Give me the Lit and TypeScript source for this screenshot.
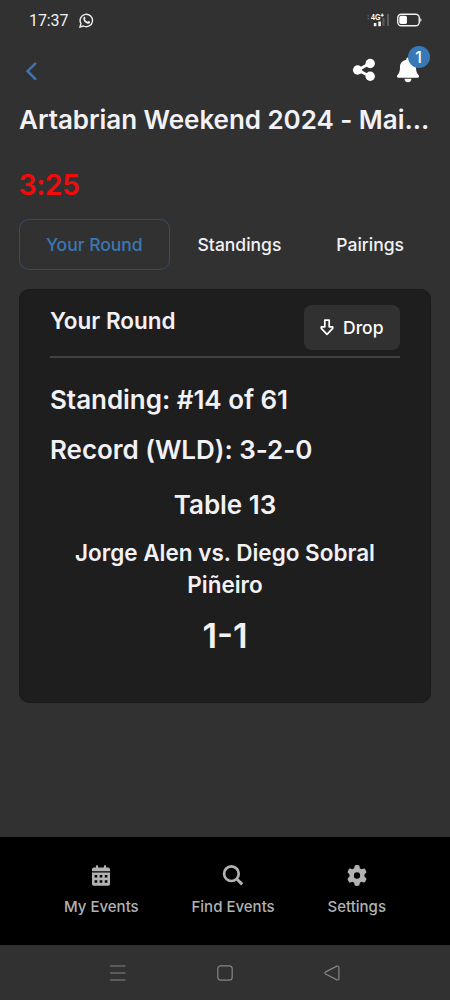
import { LitElement, html, css } from "lit";
import { customElement } from "lit/decorators.js";

const gear = "M495.9 166.6c3.2 8.7 .5 18.4-6.4 24.6l-43.3 39.4c1.1 8.3 1.7 16.8 1.7 25.4s-.6 17.1-1.7 25.4l43.3 39.4c6.9 6.2 9.6 15.9 6.4 24.6c-4.4 11.9-9.7 23.3-15.8 34.3l-4.7 8.1c-6.6 11-14 21.4-22.1 31.2c-5.9 7.2-15.7 9.6-24.5 6.8l-55.7-17.7c-13.4 10.3-28.2 18.9-44 25.4l-12.5 57.1c-2 9.1-9 16.3-18.2 17.8c-13.8 2.3-28 3.5-42.5 3.5s-28.7-1.2-42.5-3.5c-9.2-1.5-16.2-8.7-18.2-17.8l-12.5-57.1c-15.8-6.5-30.6-15.1-44-25.4L83.1 425.9c-8.8 2.8-18.6 .3-24.5-6.8c-8.1-9.8-15.5-20.2-22.1-31.2l-4.7-8.1c-6.1-11-11.4-22.4-15.8-34.3c-3.2-8.7-.5-18.4 6.4-24.6l43.3-39.4C64.6 273.1 64 264.6 64 256s.6-17.1 1.7-25.4L22.4 191.2c-6.9-6.2-9.6-15.9-6.4-24.6c4.4-11.9 9.7-23.3 15.8-34.3l4.7-8.1c6.6-11 14-21.4 22.1-31.2c5.9-7.2 15.7-9.6 24.5-6.8l55.7 17.7c13.4-10.3 28.2-18.9 44-25.4l12.5-57.1c2-9.1 9-16.3 18.2-17.8C227.3 1.2 241.5 0 256 0s28.7 1.2 42.5 3.5c9.2 1.5 16.2 8.7 18.2 17.8l12.5 57.1c15.8 6.5 30.6 15.1 44 25.4l55.7-17.7c8.8-2.8 18.6-.3 24.5 6.8c8.1 9.8 15.5 20.2 22.1 31.2l4.7 8.1c6.1 11 11.4 22.4 15.8 34.3zM256 336a80 80 0 1 0 0-160 80 80 0 1 0 0 160z";

const calendarIcon = html`<svg width="18" height="21" viewBox="0 0 18 21" fill="currentColor">
  <path fill-rule="evenodd" d="M0 7.6h18v11.4a1.8 1.8 0 0 1-1.8 1.8H1.8A1.8 1.8 0 0 1 0 19zM2.6 10v2.4h2.6V10zM7.7 10v2.4h2.6V10zM12.8 10v2.4h2.6V10zM2.6 15.3v2.5h2.6v-2.5zM7.7 15.3v2.5h2.6v-2.5zM12.8 15.3v2.5h2.6v-2.5z"/>
  <path d="M0 6.3V4.4a1.8 1.8 0 0 1 1.8-1.8h2.1V1a.7.7 0 0 1 .7-.7h.8a.7.7 0 0 1 .7.7v1.6h5.8V1a.7.7 0 0 1 .7-.7h.8a.7.7 0 0 1 .7.7v1.6h2.1A1.8 1.8 0 0 1 18 4.4v1.9z"/></svg>`;
const searchIcon = html`<svg width="22" height="21" viewBox="0 0 22 21" fill="none" stroke="currentColor" stroke-width="2.7">
  <circle cx="9.4" cy="8.7" r="7.3"/><path d="M14.3 13.5l5.9 5.9" stroke-width="3"/></svg>`;
const gearIcon = html`<svg width="20" height="21" viewBox="0 0 512 512" preserveAspectRatio="none"><path fill="currentColor" d=${gear}></path></svg>`;

@customElement("app-root")
export class AppRoot extends LitElement {
  static styles = css`
    :host { display: flex; flex-direction: column; height: 1000px; width: 450px; overflow: hidden;
      box-sizing: border-box; background: #313131; color: #f1f1f6;
      font-family: Inter, "Noto Sans", sans-serif; font-weight: 600; }
    svg { display: block; flex: none; }
    .status { height: 40px; display: flex; align-items: center; padding: 0 28px 0 29px; box-sizing: border-box; }
    .time { font: 400 16px/20px Roboto, sans-serif; padding-top: 1px; width: 50px; letter-spacing: -.1px; color: #f2f2f2; }
    .grow { flex: 1; }
    .battery { margin-left: 5px; }
    .top { height: 61px; display: flex; align-items: center; padding: 1px 19px 0 25px; box-sizing: border-box; }
    .share { margin: 0 20.5px 2px 0; }
    .bell { position: relative; width: 35px; height: 60px; display: flex; align-items: center; }
    .bell svg { margin-bottom: 2px; }
    .badge { position: absolute; left: 11.5px; top: 5px; width: 22px; height: 22px; border-radius: 50%;
      background: #3778b7; font-size: 16px; font-weight: 500; line-height: 22px; text-align: center; color: #fff; }
    .title { margin: 0; padding: 0 19px; height: 38px; font-size: 26px; letter-spacing: -.04px; font-weight: 600; line-height: 38px; white-space: nowrap; }
    .timer { padding: 0 18.5px; margin-top: 27px; height: 38px; font-size: 28.5px; letter-spacing: -.5px; line-height: 38px; color: #f30b0b; }
    .tabs { display: flex; margin: 15px 19px 0; height: 51px; font-size: 17.5px; font-weight: 500; }
    .tab { display: flex; align-items: center; justify-content: center; box-sizing: border-box; padding-bottom: 1px; border: 1px solid transparent; border-radius: 10px; }
    .tab.a { width: 151px; color: #3b77b4; border-color: #344d66; }
    .tab.b { width: 140px; }
    .tab.c { width: 122px; }
    .card { margin: 19px 19px 0; height: 414px; box-sizing: border-box; border: 1px solid #1a1a1a; border-radius: 10px;
      background: #1e1e1e; padding: 15px 30px 0; }
    .head { display: flex; justify-content: space-between; align-items: flex-start; height: 53px; box-sizing: border-box; border-bottom: 2px solid #414141; }
    .h { font-size: 22.5px; line-height: 31px; }
    .drop { display: flex; align-items: center; gap: 9px; width: 96px; height: 45px; padding-left: 16px; box-sizing: border-box;
      border-radius: 8px; background: #313131; font-size: 17.5px; font-weight: 500; color: #fff; }
    .line { font-size: 26px; letter-spacing: -.04px; line-height: 36px; }
    .s1 { margin-top: 24px; } .s2 { margin-top: 14px; } .s3 { margin-top: 19px; }
    .center { text-align: center; }
    .players { font-size: 22.5px; line-height: 32px; margin-top: 14px; }
    .score { font-size: 34.5px; line-height: 44px; margin-top: 13px; }
    .nav { margin-top: auto; height: 108px; box-sizing: border-box; background: #000; color: #b2b2b2; display: flex;
      justify-content: space-between; padding: 27.5px 64px 0; font-size: 15px; font-weight: 500; }
    .item { display: flex; flex-direction: column; align-items: center; }
    .item span { margin-top: 10.5px; line-height: 22px; white-space: nowrap; }
    .system { height: 55px; display: flex; align-items: center; justify-content: space-between; padding: 0 110px 0 109px; box-sizing: border-box; color: #858585; }
    .ant { font: 700 9px "Liberation Sans", sans-serif; }
  `;

  render() {
    return html`
      <div class="status">
        <span class="time">17:37</span>
        <svg width="15" height="15" viewBox="0 0 15 15" fill="none" stroke="#eee" stroke-width="1.4">
          <path d="M1 14l.9-3.5A6.2 6.2 0 1 1 4.5 13z"/>
          <path fill="#eee" stroke="none" d="M5 3.8c.5-.3.9-.1 1 .3l.5 1.2c0 .4-.6.7-.6 1 .5 1.1 1.5 2 2.7 2.5.4 0 .7-.8 1.1-.7l1.3.7c.5.4-.1 1.3-.7 1.7-1.3.7-3.1-.1-4.4-1.3C4.5 7.9 3.6 5.2 5 3.8z"/>
        </svg>
        <span class="grow"></span>
        <svg width="25" height="16" viewBox="0 0 25 16">
          <g fill="#5c5c5c"><rect x=".5" y="3" width="1.5" height="1.5"/><rect x=".5" y="6" width="1.5" height="1.5"/><rect x="15.5" y="6" width="2" height="8"/><rect x="20" y="2" width="2" height="12"/></g>
          <g fill="#f2f2f2"><rect x="6.8" y="11" width="2.6" height="3.2"/><rect x="11.3" y="9.5" width="2.6" height="4.7"/></g>
          <text class="ant" x="4" y="8" fill="#fff" textLength="9.5" lengthAdjust="spacingAndGlyphs">4G</text>
          <path d="M13.6 3.2h3.2M15.2 1.6v3.2" stroke="#fff" stroke-width="1.1"/>
        </svg>
        <svg class="battery" width="25" height="14" viewBox="0 0 25 14">
          <rect x=".75" y="1.2" width="21.5" height="11.5" rx="3.5" fill="none" stroke="#f2f2f2" stroke-width="1.4"/>
          <rect x="2.3" y="2.8" width="7.7" height="8.3" rx="1.8" fill="#fff"/><path d="M23.2 4.9q1.3.4 1.3 2.05t-1.3 2.05z" fill="#ddd"/>
        </svg>
      </div>
      <div class="top">
        <svg width="13" height="20" viewBox="0 0 13 20" fill="none" stroke="#3b77b4" stroke-width="2.5"><path d="M11 1.8L2.6 10.2l8.4 8.4"/></svg>
        <span class="grow"></span>
        <svg class="share" width="24" height="24" viewBox="0 0 24 24" fill="#fff" stroke="#fff">
          <path d="M18.2 5.3L5.8 12l12.4 6.5" fill="none" stroke-width="2.8"/>
          <circle cx="5.6" cy="12" r="4.7" stroke="none"/><circle cx="18.2" cy="5.5" r="4.7" stroke="none"/><circle cx="18.2" cy="18.2" r="4.7" stroke="none"/>
        </svg>
        <div class="bell">
          <svg width="24" height="26" viewBox="0 0 24 26" fill="#fff">
            <path d="M12 .6c.9 0 1.7.7 1.7 1.6v.6c4 .8 6.3 3.5 6.3 7.2 0 4.3.8 6 2.7 8.3.8 1 .2 2.4-1.1 2.4H2.4c-1.3 0-1.9-1.4-1.1-2.4C3.2 16 4 14.3 4 10c0-3.700 2.300-6.400 6.300-7.200v-.6C10.300 1.300 11.100.6 12 .6z"/>
            <path d="M8.6 21.800h6.800a3.400 3.400 0 0 1-6.800 0z"/>
          </svg>
          <span class="badge">1</span>
        </div>
      </div>
      <h1 class="title">Artabrian Weekend 2024 - Mai...</h1>
      <div class="timer">3:25</div>
      <div class="tabs"><div class="tab a">Your Round</div><div class="tab b">Standings</div><div class="tab c">Pairings</div></div>
      <section class="card">
        <div class="head">
          <span class="h">Your Round</span>
          <div class="drop">
            <svg width="14" height="17" viewBox="0 0 14 17" fill="none" stroke="#fff" stroke-width="1.7" stroke-linejoin="round"><path d="M4.8 1.2h4.4v6.6h3.5v1.5L7 15.4 1.3 9.3V7.8h3.5z"/></svg>
            <span>Drop</span>
          </div>
        </div>
        <div class="line s1">Standing: #14 of 61</div>
        <div class="line s2">Record (WLD): 3-2-0</div>
        <div class="line s3 center">Table 13</div>
        <div class="players center">Jorge Alen vs. Diego Sobral Piñeiro</div>
        <div class="score center">1-1</div>
      </section>
      <nav class="nav">
        <div class="item">${calendarIcon}<span>My Events</span></div>
        <div class="item">${searchIcon}<span>Find Events</span></div>
        <div class="item">${gearIcon}<span>Settings</span></div>
      </nav>
      <div class="system">
        <svg width="17" height="16" viewBox="0 0 17 16" stroke="currentColor" stroke-width="1.2"><path d="M1 1h15.5M1 8h15.5M1 15h15.5"/></svg>
        <svg width="16" height="16" viewBox="0 0 16 16" fill="none" stroke="currentColor" stroke-width="1.2"><rect x=".8" y=".8" width="14.4" height="14.4" rx="3"/></svg>
        <svg width="16" height="16" viewBox="0 0 16 16" fill="none" stroke="currentColor" stroke-width="1.2"><path d="M1.6 6.9L13 1.1q1.8-.5 1.9 1.2v11.4q-.1 1.7-1.9 1.2L1.6 9.1q-1.5-1.1 0-2.2z"/></svg>
      </div>`;
  }
}
